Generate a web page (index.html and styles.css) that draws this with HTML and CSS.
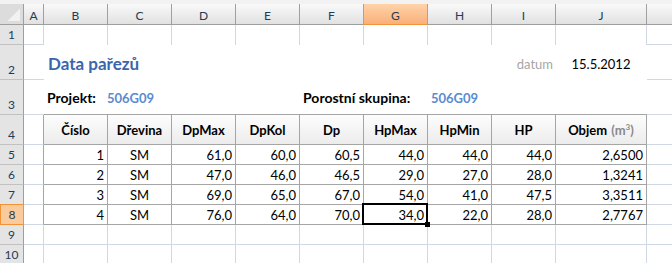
FILE: index.html
```html
<!DOCTYPE html>
<html lang="cs">
<head>
    <meta charset="UTF-8">
    <title>Data pařezů</title>
    <link rel="stylesheet" href="styles.css">
</head>
<body>
<div id="sheet">
    <!-- column headers -->
    <div class="corner"></div>
    <div class="ch">A</div>
    <div class="ch">B</div>
    <div class="ch">C</div>
    <div class="ch">D</div>
    <div class="ch">E</div>
    <div class="ch">F</div>
    <div class="ch on">G</div>
    <div class="ch">H</div>
    <div class="ch">I</div>
    <div class="ch">J</div>
    <div class="ch"></div>

    <!-- row 1 -->
    <div class="rh">1</div>
    <div class="c"></div>
    <div class="c nob"></div>
    <div class="c nob"></div>
    <div class="c nob"></div>
    <div class="c nob"></div>
    <div class="c nob"></div>
    <div class="c nob"></div>
    <div class="c nob"></div>
    <div class="c nob"></div>
    <div class="c nob"></div>
    <div class="c"></div>

    <!-- row 2 -->
    <div class="rh">2</div>
    <div class="c nor"></div>
    <div class="fill title span7">Data pařezů</div>
    <div class="fill datum">datum</div>
    <div class="fill date">15.5.2012</div>
    <div class="c nor"></div>

    <!-- row 3 -->
    <div class="rh">3</div>
    <div class="c nor"></div>
    <div class="fill info span4"><b>Projekt:</b><span class="code">506G09</span></div>
    <div class="fill info span2"><b>Porostní skupina:</b></div>
    <div class="fill info span3"><span class="code code2">506G09</span></div>
    <div class="c nor"></div>

    <!-- row 4, table head -->
    <div class="rh">4</div>
    <div class="c edge"></div>
    <div class="th">Číslo</div>
    <div class="th">Dřevina</div>
    <div class="th">DpMax</div>
    <div class="th">DpKol</div>
    <div class="th">Dp</div>
    <div class="th">HpMax</div>
    <div class="th">HpMin</div>
    <div class="th">HP</div>
    <div class="th">Objem <span class="unit">(m<sup>3</sup>)</span></div>
    <div class="c"></div>

    <!-- rows 5-8, table body -->
    <div class="rh">5</div>
    <div class="c edge"></div>
    <div class="td">1</div>
    <div class="td mid">SM</div>
    <div class="td">61,0</div>
    <div class="td">60,0</div>
    <div class="td">60,5</div>
    <div class="td">44,0</div>
    <div class="td">44,0</div>
    <div class="td">44,0</div>
    <div class="td">2,6500</div>
    <div class="c"></div>

    <div class="rh">6</div>
    <div class="c edge"></div>
    <div class="td">2</div>
    <div class="td mid">SM</div>
    <div class="td">47,0</div>
    <div class="td">46,0</div>
    <div class="td">46,5</div>
    <div class="td">29,0</div>
    <div class="td">27,0</div>
    <div class="td">28,0</div>
    <div class="td">1,3241</div>
    <div class="c"></div>

    <div class="rh">7</div>
    <div class="c edge"></div>
    <div class="td">3</div>
    <div class="td mid">SM</div>
    <div class="td">69,0</div>
    <div class="td">65,0</div>
    <div class="td">67,0</div>
    <div class="td">54,0</div>
    <div class="td">41,0</div>
    <div class="td">47,5</div>
    <div class="td">3,3511</div>
    <div class="c"></div>

    <div class="rh on">8</div>
    <div class="c edge"></div>
    <div class="td">4</div>
    <div class="td mid">SM</div>
    <div class="td">76,0</div>
    <div class="td">64,0</div>
    <div class="td">70,0</div>
    <div class="td sel">34,0</div>
    <div class="td">22,0</div>
    <div class="td">28,0</div>
    <div class="td">2,7767</div>
    <div class="c"></div>

    <!-- rows 9-10 -->
    <div class="rh">9</div>
    <div class="c"></div>
    <div class="c"></div>
    <div class="c"></div>
    <div class="c"></div>
    <div class="c"></div>
    <div class="c"></div>
    <div class="c"></div>
    <div class="c"></div>
    <div class="c"></div>
    <div class="c"></div>
    <div class="c"></div>

    <div class="rh">10</div>
    <div class="c"></div>
    <div class="c"></div>
    <div class="c"></div>
    <div class="c"></div>
    <div class="c"></div>
    <div class="c"></div>
    <div class="c"></div>
    <div class="c"></div>
    <div class="c"></div>
    <div class="c"></div>
    <div class="c"></div>
</div>
</body>
</html>
```

FILE: styles.css
```css
* {
    box-sizing: border-box;
}

body {
    margin: 0;
    background: #fff;
    font-family: Lato, "Liberation Sans", sans-serif;
    font-size: 13px;
    color: #000;
    overflow: hidden;
}

#sheet {
    display: grid;
    grid-template-columns: 24px 20px repeat(8, 64px) 91px 26px;
    grid-template-rows: 21px 20px 35px 35px 30px repeat(6, 20px);
    border-top: 4px solid #f2f2f2;
    box-shadow: inset 0 1px 0 #a3a3a3;
    width: 672px;
}

/* headers */
.corner {
    background: #dcdcdc linear-gradient(135deg, transparent 50%, #f1f1f1 50%) no-repeat right 3px bottom 3px / 13px 13px;
    border-right: 1px solid #9e9e9e;
    border-bottom: 1px solid #9e9e9e;
}

.ch {
    display: flex;
    align-items: center;
    justify-content: center;
    padding-top: 2px;
    font-size: 12px;
    color: #243b53;
    background: linear-gradient(#f9f9f9, #e1e1e1);
    border-right: 1px solid #a0a0a0;
    border-bottom: 1px solid #9e9e9e;
}

.ch.on {
    background: linear-gradient(#ffd3a8, #f9b07a);
    border: 1px solid #f29436;
    border-top: 0;
    margin-left: -1px;
}

.rh {
    display: flex;
    align-items: flex-end;
    justify-content: center;
    padding-bottom: 2px;
    font-size: 12px;
    color: #243b53;
    background: #e4e4e4;
    border-right: 1px solid #9e9e9e;
    border-bottom: 1px solid #c1c1c1;
}

.rh.on {
    background: #f8ca9c;
    border: 1px solid #f29436;
    margin-top: -1px;
}

/* plain cells */
.c {
    border-right: 1px solid #d0d7e5;
    border-bottom: 1px solid #d0d7e5;
}

.c.nob {
    border-bottom: 0;
}

.c.nor {
    border-right: 0;
}

.c.edge {
    border-right-color: #a5a5a5;
}

/* white filled block above the table */
.fill {
    display: flex;
    align-items: center;
    white-space: nowrap;
    border-bottom: 1px solid transparent;
}

.span7 {
    grid-column: span 7;
}

.span4 {
    grid-column: span 4;
}

.span3 {
    grid-column: span 3;
}

.span2 {
    grid-column: span 2;
}

.title {
    padding: 2px 0 0 4px;
    font-size: 17px;
    font-weight: bold;
    color: #3b66ab;
}

.datum {
    justify-content: flex-end;
    padding: 3px 3px 0 0;
    color: #a6a6a6;
}

.date {
    justify-content: center;
    padding: 3px 1px 0 0;
}

.info {
    padding: 1px 0 0 3px;
    font-size: 14px;
    border-bottom-color: #a5a5a5;
}

.code {
    margin-left: 11px;
    font-size: 13px;
    font-weight: bold;
    color: #5a8bd0;
}

.code2 {
    margin-left: 0;
}

/* table */
.th, .td {
    display: flex;
    border-right: 1px solid #a5a5a5;
    border-bottom: 1px solid #a5a5a5;
    white-space: nowrap;
}

.th {
    align-items: center;
    justify-content: center;
    padding-top: 1px;
    font-weight: bold;
    background: linear-gradient(#fdfdfd, #ececec);
}

.unit {
    margin-left: 4px;
    color: #8a8a8a;
}

.unit sup {
    font-size: 8px;
    line-height: 0;
}

.td {
    align-items: flex-end;
    justify-content: flex-end;
    padding: 0 3px 1px 0;
}

.td.mid {
    justify-content: center;
    padding-right: 0;
}

/* active cell */
.sel {
    position: relative;
}

.sel::after {
    content: '';
    position: absolute;
    left: -2px;
    top: -2px;
    right: -1px;
    bottom: -1px;
    border: 2px solid #000;
}

.sel::before {
    content: '';
    position: absolute;
    right: -3px;
    bottom: -3px;
    width: 5px;
    height: 5px;
    background: #000;
    z-index: 1;
}
```
